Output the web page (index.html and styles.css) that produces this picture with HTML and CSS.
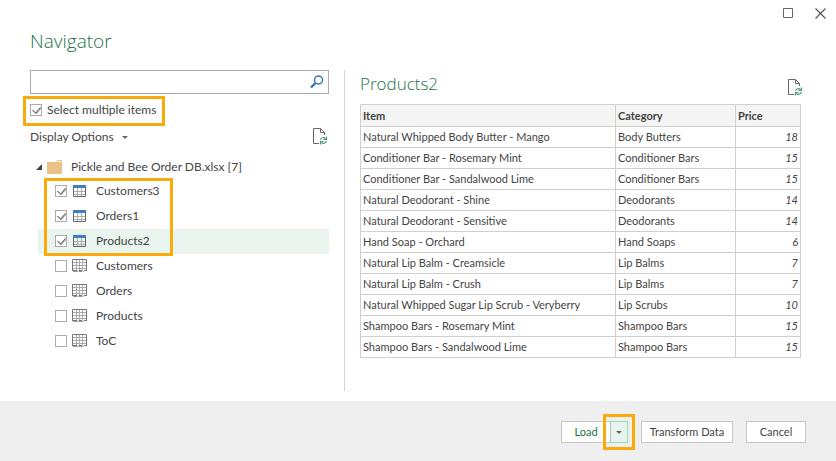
FILE: index.html
```html
<!DOCTYPE html>
<html lang="en">
<head>
  <meta charset="UTF-8" />
  <meta name="viewport" content="width=device-width, initial-scale=1.0"/>
  <title>Navigator</title>
  <link rel="stylesheet" href="styles.css">
</head>
<body>

<!-- shared icons -->
<svg class="sprite" aria-hidden="true">
  <symbol id="icon-refresh" viewBox="0 0 16 17">
    <path d="M6 15.5H.5V.5H7.500L11.500 4.500V7" fill="none" stroke="#666" />
    <path d="M7.500.5V4.500H11.500" fill="none" stroke="#666" />
    <path d="M7.500 12C8 9.500 11 9 12.500 10.500M13.500 8.500V11.500H10.500M13.500 13C12.500 15.500 10 16 8.500 14.500M7.500 16.500V13.500H10.500" fill="none" stroke="#4a9b7c" stroke-width="1.200" />
  </symbol>
  <symbol id="icon-table" viewBox="0 0 15 14">
    <path d="M1 1h13v3H1z" fill="#3f7fbf" />
    <path d="M2 7.500H13M2 10.500H13M5.500 4V13M9.500 4V13" stroke="#aaa" />
    <path d="M1.500 4V12.500H13.500V4" fill="none" stroke="#666" />
  </symbol>
  <symbol id="icon-sheet" viewBox="0 0 15 14">
    <path d="M1 3.500H14M1 6.500H14M1 9.500H14M4.500 1V11M7.500 1V11M10.500 1V11" stroke="#aaa" />
    <path d="M.5 12V.5H14.500V12M0 11.500H5L6 12.500L7 11.500H10L11 12.500L12 11.500H15" fill="none" stroke="#777" />
    <path d="M1 12.500H5M7 12.500H10" stroke="#999" />
  </symbol>
</svg>

<header class="titlebar">
  <button type="button" aria-label="Maximize">
    <svg width="11" height="11"><path d="M.5.5h9v9h-9z" fill="none" stroke="#666" /></svg>
  </button>
  <button type="button" aria-label="Close">
    <svg width="11" height="11"><path d="M.5.5l10 10M10.500.5l-10 10" fill="none" stroke="#555" stroke-width="1.200" /></svg>
  </button>
</header>

<h1>Navigator</h1>

<main class="panes">
  <section class="tree-pane">
    <form class="search">
      <input type="text" aria-label="Search">
      <button type="submit" aria-label="Search">
        <svg width="14" height="14"><circle cx="8.500" cy="5" r="4" fill="none" stroke="#3a73b0" stroke-width="1.500" /><path d="M5.500 8L1 12.500" stroke="#3a73b0" stroke-width="2.400" /></svg>
      </button>
    </form>
    <label class="multi highlight"><input type="checkbox" checked> Select multiple items</label>
    <div class="options">
      <button type="button" class="display-options">Display Options <span class="caret"></span></button>
      <button type="button" class="refresh" aria-label="Refresh"><svg width="16" height="17"><use href="#icon-refresh" /></svg></button>
    </div>

    <div class="folder">
      <svg width="7" height="7"><path d="M6 1V7H0z" fill="#444" /></svg>
      <svg width="16" height="14"><path d="M0 2H9L10.500 0H15V14H0z" fill="#ebc285" /><path d="M10.500 1.500H14" stroke="#fff" /></svg>
      <span>Pickle and Bee Order DB.xlsx [7]</span>
    </div>
    <ul class="items">
      <li><label><input type="checkbox" checked><svg width="15" height="14"><use href="#icon-table" /></svg>Customers3</label></li>
      <li><label><input type="checkbox" checked><svg width="15" height="14"><use href="#icon-table" /></svg>Orders1</label></li>
      <li class="selected"><label><input type="checkbox" checked><svg width="15" height="14"><use href="#icon-table" /></svg>Products2</label></li>
      <li><label><input type="checkbox"><svg width="15" height="14"><use href="#icon-sheet" /></svg>Customers</label></li>
      <li><label><input type="checkbox"><svg width="15" height="14"><use href="#icon-sheet" /></svg>Orders</label></li>
      <li><label><input type="checkbox"><svg width="15" height="14"><use href="#icon-sheet" /></svg>Products</label></li>
      <li><label><input type="checkbox"><svg width="15" height="14"><use href="#icon-sheet" /></svg>ToC</label></li>
    </ul>
  </section>

  <section class="preview">
    <div class="preview-head">
      <h2>Products2</h2>
      <button type="button" class="refresh" aria-label="Refresh preview"><svg width="16" height="17"><use href="#icon-refresh" /></svg></button>
    </div>
    <div class="table-wrap">
      <table>
        <thead>
          <tr><th class="col-item">Item</th><th class="col-category">Category</th><th>Price</th></tr>
        </thead>
        <tbody>
          <tr><td>Natural Whipped Body Butter - Mango</td><td>Body Butters</td><td>18</td></tr>
          <tr><td>Conditioner Bar - Rosemary Mint</td><td>Conditioner Bars</td><td>15</td></tr>
          <tr><td>Conditioner Bar - Sandalwood Lime</td><td>Conditioner Bars</td><td>15</td></tr>
          <tr><td>Natural Deodorant - Shine</td><td>Deodorants</td><td>14</td></tr>
          <tr><td>Natural Deodorant - Sensitive</td><td>Deodorants</td><td>14</td></tr>
          <tr><td>Hand Soap - Orchard</td><td>Hand Soaps</td><td>6</td></tr>
          <tr><td>Natural Lip Balm - Creamsicle</td><td>Lip Balms</td><td>7</td></tr>
          <tr><td>Natural Lip Balm - Crush</td><td>Lip Balms</td><td>7</td></tr>
          <tr><td>Natural Whipped Sugar Lip Scrub - Veryberry</td><td>Lip Scrubs</td><td>10</td></tr>
          <tr><td>Shampoo Bars - Rosemary Mint</td><td>Shampoo Bars</td><td>15</td></tr>
          <tr><td>Shampoo Bars - Sandalwood Lime</td><td>Shampoo Bars</td><td>15</td></tr>
        </tbody>
      </table>
    </div>
  </section>
</main>

<footer>
  <div class="split">
    <button type="button" class="btn load">Load</button>
    <button type="button" class="btn load-more highlight" aria-label="Load options"><span class="caret"></span></button>
  </div>
  <button type="button" class="btn transform">Transform Data</button>
  <button type="button" class="btn cancel">Cancel</button>
</footer>

</body>
</html>
```
FILE: styles.css
```css
* {
  box-sizing: border-box;
}
body {
  display: flex;
  flex-direction: column;
  min-height: 100vh;
  margin: 0;
  background: white;
  color: #444;
  font-family: "Segoe UI", Lato, sans-serif;
  font-size: 12px;
  line-height: 16px;
}
svg {
  display: block;
  flex: none;
}
button {
  padding: 0;
  border: none;
  background: none;
  color: inherit;
  font: inherit;
  cursor: pointer;
}
.sprite {
  position: absolute;
  width: 0;
  height: 0;
}
.titlebar {
  display: flex;
  justify-content: flex-end;
  gap: 21px;
  height: 26px;
  padding: 8px 10px 0 0;
}
.titlebar button {
  height: 11px;
}
h1, h2 {
  margin: 0;
  color: #217346;
  font-family: "Segoe UI", "Open Sans", sans-serif;
  font-weight: 300;
}
h1 {
  padding-left: 30px;
  font-size: 19px;
  line-height: 30px;
  margin-bottom: 14px;
}
h2 {
  font-size: 17px;
  line-height: 28px;
}

/* two panes */
.panes {
  display: grid;
  grid-template-columns: 157fr 230fr;
  flex: 1;
  padding: 0 32px 10px 30px;
}
.tree-pane {
  padding-right: 15px;
}
.preview {
  border-left: 1px solid #d4d4d4;
  padding-left: 15px;
}
.search {
  display: flex;
  align-items: center;
  height: 24px;
  padding-right: 4px;
  border: 1px solid #ababab;
}
.search input {
  flex: 1;
  min-width: 0;
  border: none;
  outline: none;
  font: inherit;
}
input[type="checkbox"] {
  appearance: none;
  position: relative;
  flex: none;
  width: 12px;
  height: 12px;
  margin: 0;
  border: 1px solid #ababab;
  background: white;
}
input[type="checkbox"]:checked::after {
  content: "";
  position: absolute;
  top: 0;
  left: 3px;
  width: 4px;
  height: 7px;
  border: solid #666;
  border-width: 0 1px 1px 0;
  box-shadow: 1px 0 0 #bbb;
  transform: rotate(40deg);
}
label {
  display: flex;
  align-items: center;
}
.highlight {
  outline: 3px solid #f9ab0b;
}
.multi {
  gap: 5px;
  width: 136px;
  height: 24px;
  margin: 5px 0 0 -4px;
  padding: 0 0 2px 4px;
  white-space: nowrap;
}
.options {
  display: flex;
  align-items: center;
  justify-content: space-between;
  height: 28px;
}
.options .refresh {
  padding-bottom: 2px;
}
.display-options {
  display: flex;
  align-items: center;
  gap: 8px;
}
.caret {
  border: 3px solid transparent;
  border-top-color: #666;
  border-bottom: none;
}
.folder {
  display: flex;
  align-items: center;
  height: 25px;
  margin-top: 3px;
  padding-left: 6px;
}
.folder svg + svg {
  margin: 0 8px 0 4px;
}

/* workbook items */
.items {
  position: relative;
  margin: 0 0 0 8px;
  padding: 0;
  list-style: none;
}
.items::after {
  content: "";
  position: absolute;
  box-sizing: border-box;
  top: -1px;
  left: 6px;
  width: 129px;
  height: 78px;
  border: 3px solid #f9ab0b;
  pointer-events: none;
}
.items label {
  height: 25px;
  padding: 0 0 1px 17px;
}
.items svg {
  margin: 0 9px 0 5px;
}
.items .selected {
  background: #e9f4ee;
}

.preview-head {
  display: flex;
  align-items: center;
  justify-content: space-between;
  height: 34px;
}
.preview-head h2 {
  padding-bottom: 6px;
}
.table-wrap {
  padding-right: 3px;
}
table {
  width: 100%;
  border-collapse: collapse;
  table-layout: fixed;
  font-size: 11px;
  line-height: 16px;
}
th, td {
  height: 21px;
  padding: 2px;
  border: 1px solid #d0d0d0;
  text-align: left;
  white-space: nowrap;
}
th {
  height: 22px;
  background: #f4f4f4;
  font-weight: 700;
}
td:last-child {
  font-style: italic;
  text-align: right;
}
.col-item {
  width: 255px;
}
.col-category {
  width: 120px;
}

footer {
  display: flex;
  justify-content: flex-end;
  gap: 13px;
  padding: 20px 30px 18px;
  background: #efefef;
}
.split {
  display: flex;
}
.btn {
  height: 22px;
  border: 1px solid #c6c6c6;
  background: white;
  font-size: 11px;
}
.load {
  width: 49px;
  border-right: none;
  color: #217346;
}
.load-more {
  display: flex;
  align-items: center;
  justify-content: center;
  width: 18px;
  border-color: #9fd5b7;
  background: #e9f4ee;
  outline-offset: 4px;
}
.transform {
  width: 92px;
}
.cancel {
  width: 60px;
}
```
